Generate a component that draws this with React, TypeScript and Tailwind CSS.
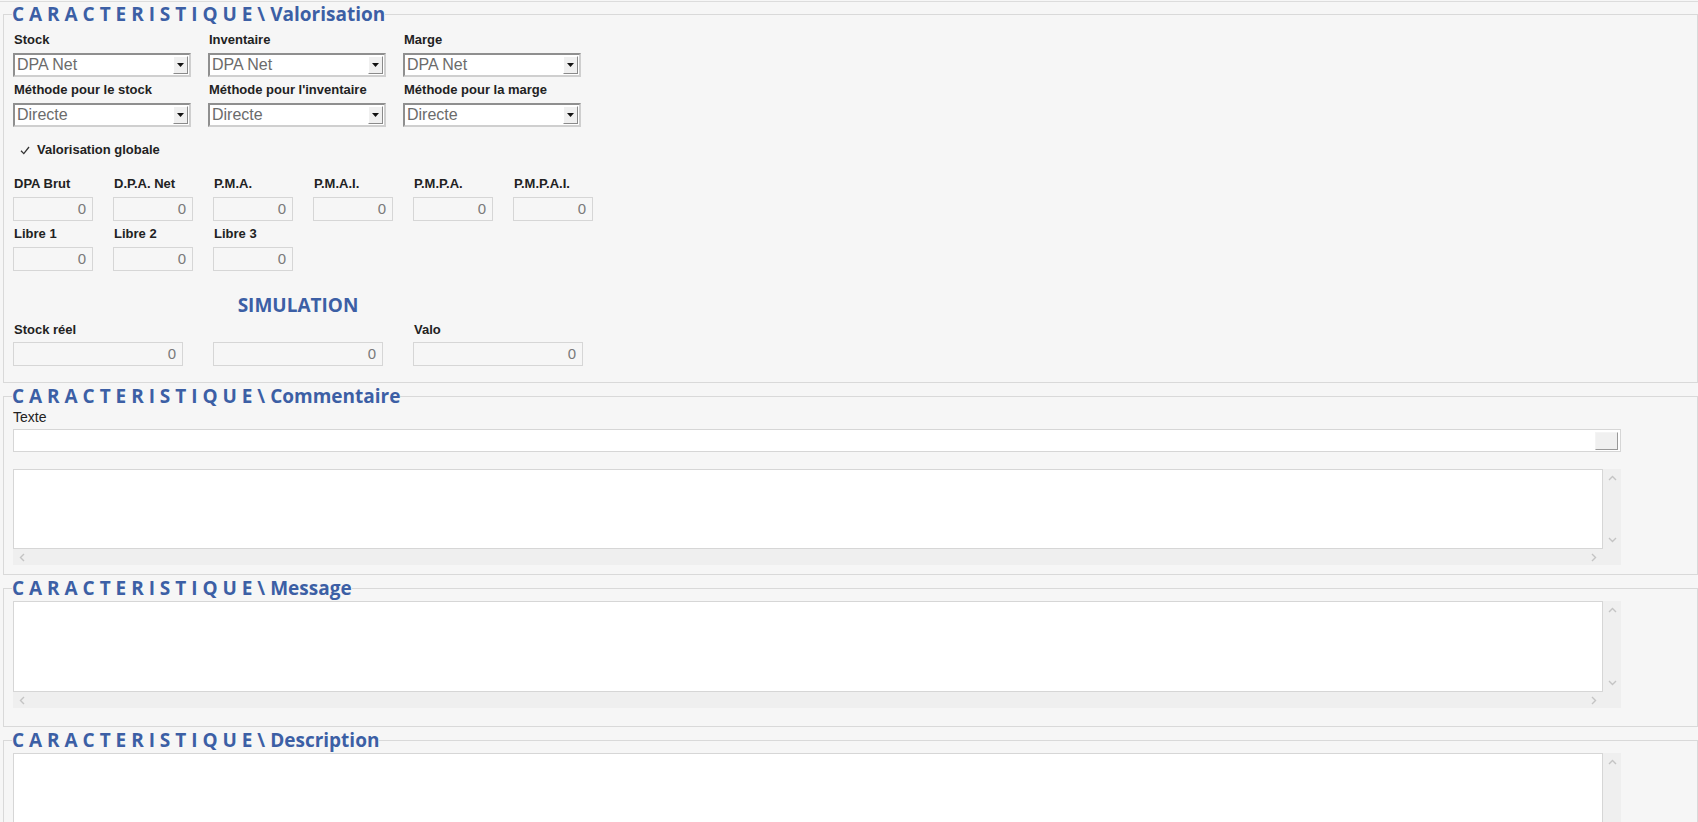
import React from "react";

const arial = "font-['Liberation_Sans',Arial,sans-serif]";
const open = "font-['Open_Sans','Noto_Sans',sans-serif]";

const Legend = ({ title }: { title: string }) => (
  <legend className={`${open} -ml-px text-[19px] leading-[24px] font-bold text-[#3c5fa5]`}>
    C A R A C T E R I S T I Q U E \ {title}
  </legend>
);

const Label = ({ text }: { text: string }) => (
  <span className={`${arial} block pl-px text-[13px] leading-[14px] font-bold text-[#222]`}>{text}</span>
);

const Select = ({ value }: { value: string }) => (
  <div className="flex h-[24px] w-[178px] border-2 border-t-[#8f8f8f] border-l-[#8f8f8f] border-r-[#cfcfcf] border-b-[#cfcfcf] bg-white">
    <span className={`${arial} flex-1 pl-[2px] text-[16px] leading-[20px] text-[#6b6b6b]`}>{value}</span>
    <span className="my-[1px] mr-[1px] flex w-[15px] items-center justify-center border border-t-white border-l-white border-r-[#8a8a8a] border-b-[#8a8a8a] bg-[#f0f0f0]">
      <svg width="7" height="4" viewBox="0 0 7 4">
        <path d="M0 0h7L3.5 4z" fill="#111" />
      </svg>
    </span>
  </div>
);

const Field = ({ label, children }: { label: string; children: React.ReactNode }) => (
  <div className="flex flex-col gap-[6px]">
    <Label text={label} />
    {children}
  </div>
);

const Num = ({ wide }: { wide?: boolean }) => (
  <div
    className={`${arial} ${wide ? "w-[170px]" : "w-[80px]"} h-[24px] border border-[#d6d6d6] bg-[#f6f6f6] pr-[6px] text-right text-[15px] leading-[22px] text-[#7a7a7a]`}
  >
    0
  </div>
);

const Up = () => (
  <svg width="9" height="6" viewBox="0 0 9 6">
    <path d="M1 5l3.5-3.5L8 5" fill="none" stroke="#c4c4c4" strokeWidth="1.4" />
  </svg>
);
const Down = () => (
  <svg width="9" height="6" viewBox="0 0 9 6">
    <path d="M1 1l3.5 3.5L8 1" fill="none" stroke="#c4c4c4" strokeWidth="1.4" />
  </svg>
);
const Left = () => (
  <svg width="6" height="9" viewBox="0 0 6 9">
    <path d="M5 1L1.5 4.5 5 8" fill="none" stroke="#c4c4c4" strokeWidth="1.4" />
  </svg>
);
const Right = () => (
  <svg width="6" height="9" viewBox="0 0 6 9">
    <path d="M1 1l3.5 3.5L1 8" fill="none" stroke="#c4c4c4" strokeWidth="1.4" />
  </svg>
);

const Area = ({ tall }: { tall?: boolean }) => (
  <div className="flex w-[1608px]">
    <div className="flex flex-1 flex-col">
      <div className={`${tall ? "h-[91px]" : "h-[80px]"} border border-[#d6d6d6] bg-white`} />
      <div className="flex h-[16px] items-center justify-between bg-[#efefef] pl-[6px] pr-[6px]">
        <Left />
        <Right />
      </div>
    </div>
    <div className="flex w-[18px] flex-col bg-[#efefef]">
      <div className={`${tall ? "h-[91px]" : "h-[80px]"} flex flex-col items-center justify-between pt-[6px] pb-[6px]`}>
        <Up />
        <Down />
      </div>
    </div>
  </div>
);

const fieldset = "mt-px border border-[#d9d9d9] pl-[9px] pr-2";

export default function App() {
  return (
    <div className={`${arial} min-h-screen bg-[#f6f6f6] pl-[3px]`}>
      <div className="-ml-[3px] h-[2px] border-b border-[#dcdcdc]" />

      <fieldset className="border border-[#d9d9d9] pl-[9px] pr-2 pb-[16px]">
        <Legend title="Valorisation" />
        <div className="mt-[7px] grid w-max grid-cols-[178px_178px_178px] gap-x-[17px] gap-y-[6px]">
          <Field label="Stock"><Select value="DPA Net" /></Field>
          <Field label="Inventaire"><Select value="DPA Net" /></Field>
          <Field label="Marge"><Select value="DPA Net" /></Field>
          <Field label="Méthode pour le stock"><Select value="Directe" /></Field>
          <Field label="Méthode pour l'inventaire"><Select value="Directe" /></Field>
          <Field label="Méthode pour la marge"><Select value="Directe" /></Field>
        </div>

        <div className="mt-[16px] flex items-center gap-[6px] pl-[7px]">
          <svg width="10" height="9" viewBox="0 0 10 9">
            <path d="M1 4.8l2.8 2.8L9 1" fill="none" stroke="#333" strokeWidth="1.3" />
          </svg>
          <Label text="Valorisation globale" />
        </div>

        <div className="mt-[20px] grid w-max grid-cols-[80px_80px_80px_80px_80px_80px] gap-x-[20px] gap-y-[6px]">
          <Field label="DPA Brut"><Num /></Field>
          <Field label="D.P.A. Net"><Num /></Field>
          <Field label="P.M.A."><Num /></Field>
          <Field label="P.M.A.I."><Num /></Field>
          <Field label="P.M.P.A."><Num /></Field>
          <Field label="P.M.P.A.I."><Num /></Field>
          <Field label="Libre 1"><Num /></Field>
          <Field label="Libre 2"><Num /></Field>
          <Field label="Libre 3"><Num /></Field>
        </div>

        <div className="mt-[22px] grid w-max grid-cols-[170px_170px_170px] gap-x-[30px]">
          <span />
          <span className={`${open} text-center text-[19px] leading-[24px] font-bold text-[#3c5fa5]`}>SIMULATION</span>
          <span />
          <div className="mt-[6px]"><Label text="Stock réel" /></div>
          <span />
          <div className="mt-[6px]"><Label text="Valo" /></div>
          <div className="mt-[5px]"><Num wide /></div>
          <div className="mt-[5px]"><Num wide /></div>
          <div className="mt-[5px]"><Num wide /></div>
        </div>
      </fieldset>

      <fieldset className={`${fieldset} pb-[9px]`}>
        <Legend title="Commentaire" />
        <span className="mt-[2px] block text-[14px] leading-[14px] text-[#222]">Texte</span>
        <div className="mt-[5px] flex h-[23px] w-[1608px] items-center justify-end border border-[#d6d6d6] bg-white pr-[2px]">
          <div className="h-[18px] w-[23px] border border-t-[#f4f4f4] border-l-[#f4f4f4] border-r-[#999] border-b-[#999] bg-[#f0f0f0]" />
        </div>
        <div className="mt-[17px]">
          <Area />
        </div>
      </fieldset>

      <fieldset className={`${fieldset} pb-[18px]`}>
        <Legend title="Message" />
        <div className="mt-px">
          <Area tall />
        </div>
      </fieldset>

      <fieldset className={`${fieldset} pb-[18px]`}>
        <Legend title="Description" />
        <div className="mt-px">
          <Area tall />
        </div>
      </fieldset>
    </div>
  );
}
